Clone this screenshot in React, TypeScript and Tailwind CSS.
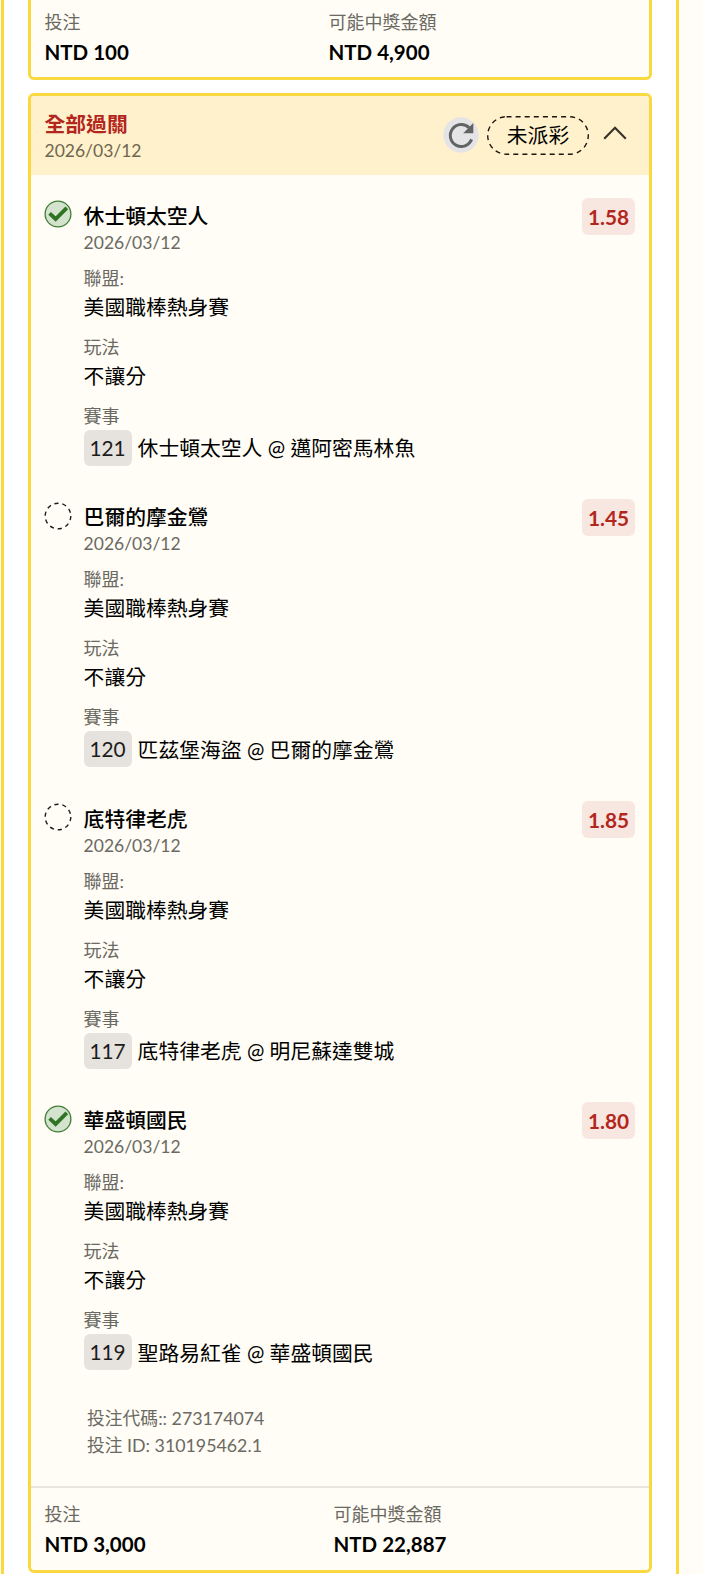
type TLeg = {
  team: string
  odds: string
  number: string
  match: string
  won: boolean
}

const LEGS: TLeg[] = [
  { team: '休士頓太空人', odds: '1.58', number: '121', match: '休士頓太空人 @ 邁阿密馬林魚', won: true },
  { team: '巴爾的摩金鶯', odds: '1.45', number: '120', match: '匹茲堡海盜 @ 巴爾的摩金鶯', won: false },
  { team: '底特律老虎', odds: '1.85', number: '117', match: '底特律老虎 @ 明尼蘇達雙城', won: false },
  { team: '華盛頓國民', odds: '1.80', number: '119', match: '聖路易紅雀 @ 華盛頓國民', won: true },
]

const StatusIcon = ({ won }: { won: boolean }) => (
  <svg viewBox="0 0 28 28" className="w-7 h-7 shrink-0" fill="none">
    {won ? (
      <>
        <circle cx="14" cy="14" r="12.9" fill="#d3e3cd" stroke="#3f7f35" strokeWidth="1.3" />
        <path d="M5.6 13.4 11.6 19 22.8 7.8" stroke="#2f7422" strokeWidth="3.8" />
      </>
    ) : (
      <circle cx="14" cy="14" r="12.8" stroke="#1c1c1c" strokeWidth="1.4" strokeDasharray="4.2 3.84" />
    )}
  </svg>
)

const RefreshIcon = () => (
  <svg viewBox="0 0 36 36" className="w-9 h-9 shrink-0" fill="none">
    <circle cx="18" cy="18" r="17.7" fill="#e4e4e7" />
    <path d="M28.6 22.4A11 11 0 1 1 26.2 10.8" stroke="#616365" strokeWidth="3" />
    <path d="M30.3 6.1V16.2H20.2Z" fill="#616365" />
  </svg>
)

const Field = ({ label, value }: { label: string; value: string }) => (
  <div className="mb-[11px]">
    <div className="h-6 text-[18px] leading-6 text-[#6b6963]">{label}</div>
    <div className="h-[34px] leading-[34px]">{value}</div>
  </div>
)

const Leg = ({ leg }: { leg: TLeg }) => (
  <div className="flex h-[301.6px] pl-[13px] pr-[13px]">
    <div className="pt-[25px]">
      <StatusIcon won={leg.won} />
    </div>
    <div className="pl-[11.6px] pt-[25.5px] grow">
      <div className="h-[30px] leading-[30px] font-medium">{leg.team}</div>
      <div className="h-[22px] mb-[13px] text-[17.5px] leading-[23px] text-[#6b6963]">2026/03/12</div>
      <Field label="聯盟:" value="美國職棒熱身賽" />
      <Field label="玩法" value="不讓分" />
      <div className="h-6 text-[18px] leading-6 text-[#6b6963]">賽事</div>
      <div className="flex items-center h-9 mt-[2px] gap-[6px]">
        <span className="w-12 h-9 rounded-md bg-[#e6e3de] text-center leading-9 text-[#1c1c1c]">{leg.number}</span>
        <span>{leg.match}</span>
      </div>
    </div>
    <div className="mt-[22.5px] w-[53px] mr-px h-[37px] rounded-md bg-[#f8e6e0] text-center leading-[37px] text-[20.8px] font-bold text-[#b3261e]">
      {leg.odds}
    </div>
  </div>
)

const Total = ({ label, value }: { label: string; value: string }) => (
  <div>
    <div className="h-6 text-[18px] leading-6 text-[#6b6963]">{label}</div>
    <div className="h-9 leading-9 text-[20.5px] font-bold">{value}</div>
  </div>
)

export default function App() {
  return (
    <div
      lang="zh-TW"
      className="w-[703px] h-[1574px] overflow-hidden bg-[#fffdf5] pl-px font-['Lato','Noto_Sans_CJK_TC',sans-serif] text-[20.8px] text-black"
    >
      <div className="w-[678px] h-full bg-white border-x-[3px] border-[#f9d840] px-6">
        <section className="h-20 w-[624px] border-[3px] border-t-0 border-[#f9d840] rounded-b-md bg-[#fffdf5] pt-[9.5px] pl-[13.5px] grid grid-cols-[284px_1fr]">
          <Total label="投注" value="NTD 100" />
          <Total label="可能中獎金額" value="NTD 4,900" />
        </section>

        <section className="mt-[13px] w-[624px] h-[1480px] border-[3px] border-[#f9d840] rounded-md overflow-hidden bg-[#fffdf5]">
          <header className="h-[79px] bg-[#fff1cb] flex items-center pl-[13.5px] pr-[22px]">
            <div className="grow">
              <div className="h-7 leading-7 font-bold text-[#b3261e]">全部過關</div>
              <div className="h-6 leading-[25px] text-[17.5px] text-[#6f664f]">2026/03/12</div>
            </div>
            <div className="flex items-center pb-px">
              <RefreshIcon />
              <div className="relative ml-2 w-[102px] h-[39px] flex items-center justify-center">
                <svg viewBox="0 0 102 39" className="absolute inset-0 w-full h-full" fill="none">
                  <rect x=".7" y=".7" width="100.6" height="37.6" rx="18.8" stroke="#1c1710" strokeWidth="1.4" strokeDasharray="5 4.1" />
                </svg>
                <span>未派彩</span>
              </div>
              <svg viewBox="0 0 24 14" className="ml-[14px] -mt-1 w-6 h-[14px]" fill="none">
                <path d="M1.2 12.8 12 1.8 22.8 12.8" stroke="#39342b" strokeWidth="2.2" />
              </svg>
            </div>
          </header>

          {LEGS.map(leg => (
            <Leg key={leg.number} leg={leg} />
          ))}

          <div className="h-[104.4px] pt-6 pl-14 text-[17.8px] leading-[27px] text-[#6b6963]">
            <div>投注代碼:: 273174074</div>
            <div>投注 ID: 310195462.1</div>
          </div>

          <footer className="border-t-2 border-[#e8e5de] pt-[14px] pl-[13.5px] grid grid-cols-[289px_1fr]">
            <Total label="投注" value="NTD 3,000" />
            <Total label="可能中獎金額" value="NTD 22,887" />
          </footer>
        </section>
      </div>
    </div>
  )
}
